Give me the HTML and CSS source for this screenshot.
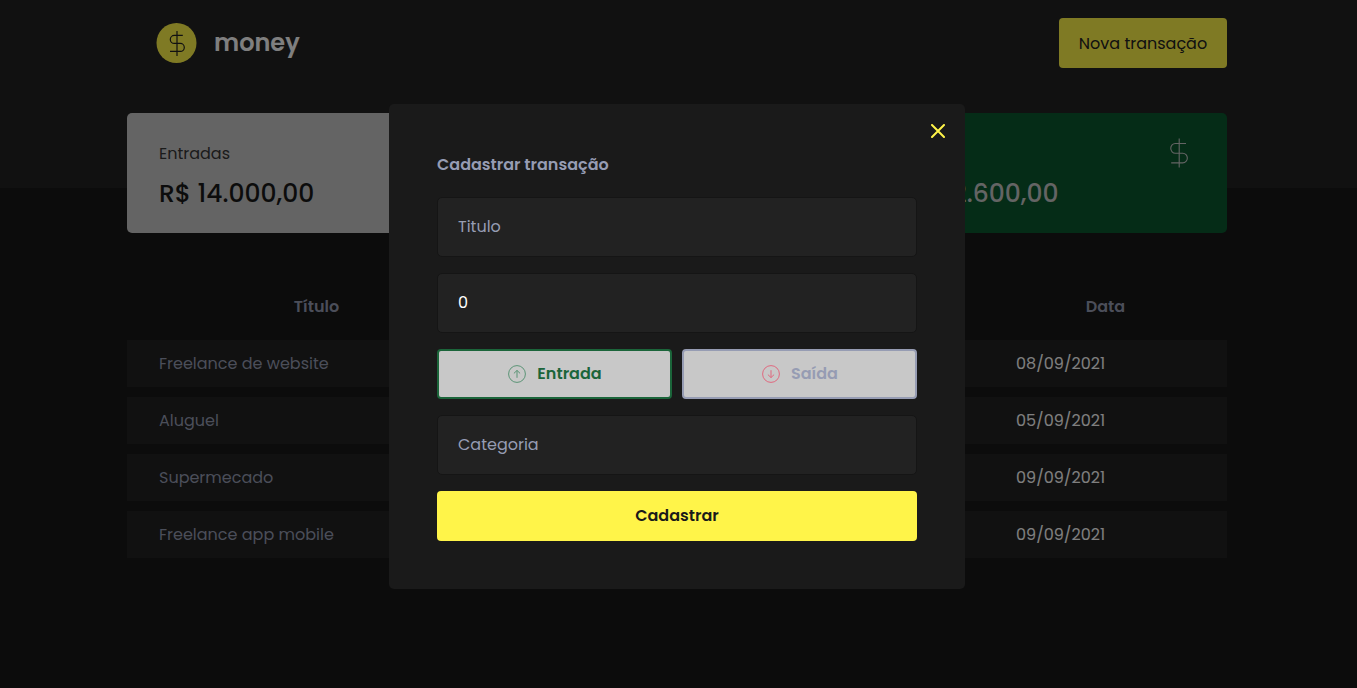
FILE: index.html
```html
<!DOCTYPE html>
<html lang="pt-BR">
<head>
<meta charset="utf-8">
<title>money</title>
<link rel="stylesheet" href="styles.css">
</head>
<body>
<header class="header">
  <div class="container header-row">
    <div class="brand">
      <svg class="brand-icon" viewBox="0 0 40 40"><circle cx="20" cy="20" r="20" fill="#fff449"/><path d="M20.500 8v25M26.300 12.400h-8.500a4 4 0 0 0 0 8h6a4 4 0 0 1 0 8h-10.300" fill="none" stroke="#222" stroke-width="1.200"/></svg>
      <span class="brand-name">money</span>
    </div>
    <button class="new-button">Nova transação</button>
  </div>
</header>
<main class="container main">
  <section class="cards">
    <article class="card"><div class="card-top"><p class="card-label">Entradas</p></div><strong class="card-value">R$ 14.000,00</strong></article>
    <article class="card"></article>
    <article class="card card-total">
      <div class="card-top"><p class="card-label">Total</p>
      <svg class="card-icon" viewBox="0 0 20 30"><path d="M10.200 .5v29M17 5.500H6.300a4.500 4.800 0 0 0 0 9.700h7.500a4.500 4.800 0 0 1 0 9.700H2.200" fill="none" stroke="#c8c8c8" stroke-width="1.100"/></svg></div>
      <strong class="card-value">R$ 2.600,00</strong>
    </article>
  </section>
  <section class="table">
    <div class="row head"><b>Título</b><span></span><b>Data</b></div>
    <div class="row item"><span>Freelance de website</span><span></span><time>08/09/2021</time></div>
    <div class="row item"><span>Aluguel</span><span></span><time>05/09/2021</time></div>
    <div class="row item"><span>Supermecado</span><span></span><time>09/09/2021</time></div>
    <div class="row item"><span>Freelance app mobile</span><span></span><time>09/09/2021</time></div>
  </section>
</main>
<div class="overlay">
  <div class="modal">
    <button class="close" aria-label="Fechar"><svg viewBox="0 0 14 14"><path d="M1 1l12 12M13 1L1 13" stroke="#fff449" stroke-width="2" stroke-linecap="round"/></svg></button>
    <h2 class="modal-title">Cadastrar transação</h2>
    <div class="form">
      <div class="field">Titulo</div>
      <div class="field filled">0</div>
      <div class="types">
        <button class="type type-in"><svg class="type-icon" viewBox="0 0 18 18" fill="none" stroke="#5b9476"><circle cx="9" cy="9" r="8.400"/><path d="M9 12.800V5.500M5.900 8.400L9 5.400l3.100 3"/></svg>Entrada</button>
        <button class="type type-out"><svg class="type-icon" viewBox="0 0 18 18" fill="none" stroke="#e0697f"><circle cx="9" cy="9" r="8.400"/><path d="M9 5.200v7.300M5.900 9.600l3.100 3 3.100-3"/></svg>Saída</button>
      </div>
      <div class="field">Categoria</div>
      <button class="submit">Cadastrar</button>
    </div>
  </div>
</div>
</body>
</html>
```
FILE: styles.css
```css
* { box-sizing: border-box; margin: 0; padding: 0; }
body { height: 688px; overflow: hidden; background: #181818; font: 400 16px/24px Poppins, Inter, sans-serif; color: #969cb3; }
button { border: 0; font: inherit; }
svg { display: block; }
.container { width: 1100px; margin-left: 127px; }
.header { height: 188px; padding-top: 18px; background: #222; }
.header-row { display: flex; justify-content: space-between; align-items: center; height: 50px; }
.brand { display: flex; align-items: center; gap: 17px; padding-left: 29px; }
.brand-icon { width: 41px; height: 40px; }
.brand-name { color: #fff; font-size: 24px; font-weight: 600; }
.new-button { width: 168px; height: 50px; padding-top: 2px; border-radius: 4px; background: #fff449; color: #222; }
.main { margin-top: -75px; }
.cards { display: grid; grid-template-columns: repeat(3, 1fr); gap: 32px; }
.card { height: 120px; padding: 29px 32px; border-radius: 5px; background: #c8c8c8; color: #181818; }
.card-total { background: #0a582e; color: #c8c8c8; }
.card-label { color: #363636; }
.card-total .card-label { color: #c8c8c8; }
.card-top { display: flex; justify-content: space-between; height: 24px; }
.card-icon { width: 20px; height: 30px; margin: -4px 6px 0 0; }
.card-value { display: block; margin-top: 9px; font-size: 25px; line-height: 38px; font-weight: 500; }
.table { display: grid; gap: 10px; margin-top: 60px; }
.row { display: grid; grid-template-columns: 379px 1fr 243px; align-items: center; height: 47px; }
.head { height: 37px; padding-bottom: 9px; text-align: center; }
.head b { font-weight: 600; }
.item { background: #222; }
.item span, .item time { padding-left: 32px; }
.item time { color: #fff; }
.overlay { position: fixed; inset: 0; background: rgba(0, 0, 0, .5); }
.modal { position: relative; width: 576px; height: 485px; margin: 104px 0 0 389px; padding: 49px 48px 48px; border-radius: 5px; background: #1a1a1a; }
.close { position: absolute; right: 20px; top: 20px; width: 14px; height: 14px; background: none; }
.modal-title { font-size: 16px; font-weight: 600; margin-bottom: 20px; }
.form { display: grid; gap: 16px; }
.field { height: 60px; padding: 0 20px; border: 1px solid #151515; border-radius: 5px; background: #222; line-height: 57px; }
.filled { color: #fff; }
.types { display: grid; grid-template-columns: 1fr 1fr; gap: 10px; }
.type { display: flex; align-items: center; justify-content: center; gap: 11px; height: 50px; padding-left: 1px; border: 2px solid #969cb3; border-radius: 4px; background: #c8c8c8; color: #969cb3; font-weight: 600; }
.type-in { border-color: #1b653a; color: #1b653a; }
.type-icon { width: 18px; height: 18px; }
.submit { height: 50px; border-radius: 4px; background: #fff449; color: #1a1a1a; font-weight: 600; }
```
